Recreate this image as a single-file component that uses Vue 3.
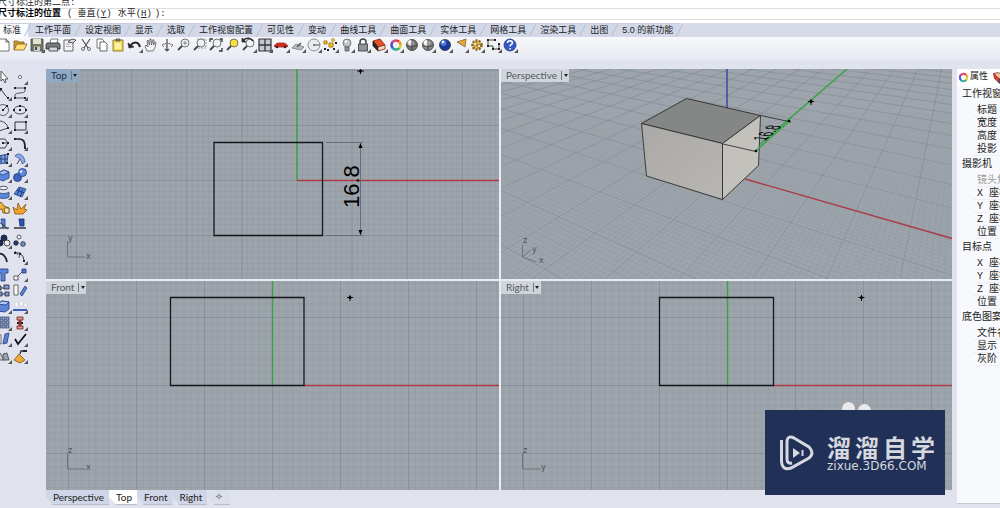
<script setup>
const menuTabs = ['标准', '工作平面', '设定视图', '显示', '选取', '工作视窗配置', '可见性', '变动', '曲线工具', '曲面工具', '实体工具', '网格工具', '渲染工具', '出图', '5.0 的新功能']

const line = (d, c = '#444', w = 1) => `<path d="${d}" fill="none" stroke="${c}" stroke-width="${w}"/>`
const shape = (d, f, c = '#333', w = 0.8) => `<path d="${d}" fill="${f}" stroke="${c}" stroke-width="${w}" stroke-linejoin="round"/>`
const dot = (x, y, r, f, c = 'none') => `<circle cx="${x}" cy="${y}" r="${r}" fill="${f}" stroke="${c}" stroke-width=".8"/>`
const nodes = (...pts) => pts.map(([x, y]) => `<rect x="${x - 1}" y="${y - 1}" width="2" height="2" fill="#222"/>`).join('')
const lens = (c = '#eef1f6') => dot(9, 6, 4, c, '#555') + line('M6 9L2 13', '#444', 1.8)
const ball = (a, b) => dot(8, 8, 5.5, b, '#333') + dot(6.5, 6, 3, a) + dot(6, 5, 1.2, '#fff')
const wheel = ['#e33', '#e9a020', '#d8cf2a', '#3cae48', '#2aa5b8', '#2f58c8', '#8a3ab8', '#d23a86']
  .map((c, i) => {
    const p = a => `${(8 + 4.5 * Math.cos(a)).toFixed(1)} ${(8 + 4.5 * Math.sin(a)).toFixed(1)}`
    return line(`M${p(i * Math.PI / 4 - 1.6)}A4.5 4.5 0 0 1 ${p((i + 1) * Math.PI / 4 - 1.6)}`, c, 2.6)
  }).join('')

const toolbar = [
  ['新建', shape('M3 2h7l3 3v9H3z', '#fff', '#555') + line('M10 2v3h3', '#555')],
  ['打开', shape('M2 13V4h4l1 1h5v3', '#c9962c', '#80601d') + shape('M2 13l3-6h10l-3 6z', '#ffe07a', '#80601d')],
  ['保存', shape('M2 2h12v12H2z', '#73765c', '#444') + '<path d="M4 2h8v5H4z" fill="#dfe6d2"/><path d="M5 9.500h6V14H5z" fill="#c9cfd5"/><path d="M6 10h2v3H6z" fill="#444"/>', 1],
  ['打印', shape('M5 6l1-4h7l-1 4', '#fff', '#555') + shape('M2 6h12l1 2v4H1V8z', '#777d84', '#222') + shape('M4 10h8l1 4H4z', '#d5d9de', '#333')],
  ['文件属性', shape('M3 3h9v11H3z', '#f4f5f7', '#444') + line('M5 7h4M5 9.500h5', '#aaa') + shape('M7 5l4-3 4 1-3 3z', '#ddd', '#333')],
  ['剪切', line('M4 2l6 9M12 2L6 11', '#555', 1.2) + dot(5, 12, 1.5, 'none', '#555') + dot(11, 12, 1.5, 'none', '#555')],
  ['复制', shape('M3 2h5l2 2v7H3z', '#fff', '#555') + shape('M6 5h5l2 2v7H6z', '#fff', '#444')],
  ['粘贴', shape('M3 3h10v11H3z', '#f3dc58', '#7a6420') + shape('M6 2h4v2H6z', '#999', '#444') + '<path d="M5 6h6v6H5z" fill="#fdf2a4"/>'],
  ['撤销', line('M4 8c3-4 8-3 9 2', '#222', 2) + shape('M1 6l1 5 5-1z', '#222'), 1],
  ['平移', shape('M4 14L2 9l1-1 2 2-1-6 1-1 1.500 5L7 2h1l.500 6L10 2.500l1 .5-.5 5L12 5l1 .5-1 5-2 3.500z', '#f5f5f5', '#555')],
  ['旋转视图', line('M8 2v12M8 14l-2-2M8 14l2-2', '#555', 1.3) + line('M3 8c2-2 8-2 11 0M3 8l2 2M14 8l-2 2', '#777')],
  ['缩放', lens() + line('M7 6h4M9 4v4', '#888')],
  ['框选缩放', lens() + '<path d="M5 2h9v9H5" fill="none" stroke="#999" stroke-dasharray="2 1"/>'],
  ['缩放至最大范围', lens() + line('M2 5V2h3M12 2h2v3M14 11v3h-3', '#333', 1.3)],
  ['缩放选取物件', lens('#f7e13c')],
  ['复原视图', lens() + line('M2 3c4-3 8-2 10 1', '#333', 1.6) + shape('M1 1v4h4z', '#222'), 1],
  ['四视图', shape('M2 2h12v12H2z', '#c5cad2', '#333', 1.2) + line('M8 2v12M2 8h12', '#333', 1.3), 1],
  ['着色车', shape('M1 9l2-2 2-1h6l2 1 2 2-1 1H2z', '#d32a22', '#a8241e') + dot(4, 10, 1.2, '#222') + dot(12, 10, 1.2, '#222'), 1],
  ['工作平面', shape('M2 11l4-4 8 3-3 3z', '#b9bec5', '#777') + line('M7 10l4-4', '#555', 1.5), 1],
  ['圆', dot(8, 8, 6, '#e8ebf0', '#777') + line('M8 8h6', '#777', 1.3) + dot(8, 8, 1, '#666'), 1],
  ['选取点', '<path d="M2 4h3v3H2zM7 6h4v4H7z" fill="#f3c32c" stroke="#a87a15"/>' + dot(11, 3, 1.5, '#f8dc50', '#aa8018') + nodes([3, 12], [6, 13], [12, 12], [14, 6]), 1],
  ['隐藏', dot(8, 6, 4, '#bfc4ca', '#666') + shape('M6 10h4v4H6z', '#8f959c', '#555') + dot(7, 4.5, 1.2, '#fff'), 1],
  ['锁定', line('M5 8V5a3 3 0 0 1 6 0v3', '#444', 1.5) + shape('M3.500 7h9v7h-9z', '#8e939a', '#333'), 1],
  ['图层', shape('M2 4l7-2 5 6-7 2z', '#e8502a', '#7e2412') + shape('M2 4l5 6v4L2 9z', '#33262a', '#222') + shape('M7 10l7-2v4l-7 2z', '#f6d9c8', '#7e2412'), 1],
  ['颜色', wheel, 1],
  ['着色', ball('#ddd', '#777') + line('M3 8c3 2 7 2 10 0M8 3v10', '#444')],
  ['渲染着色', ball('#eee', '#888') + line('M3 8c3 2 7 2 10 0M8 3v10', '#444'), 1],
  ['渲染', ball('#4f7bd6', '#173a9a'), 1],
  ['聚光灯', shape('M4 5l9-3-1 8z', '#e4a93a', '#88602a'), 1],
  ['选项', '<circle cx="8" cy="8" r="4.500" fill="#e8c257" stroke="#8c651e" stroke-width="2.500" stroke-dasharray="2 1.200"/>' + dot(6, 7, 2, '#f8e9b0', '#8c651e') + dot(10, 9, 1.7, '#f8e9b0', '#8c651e'), 1],
  ['尺寸标注', line('M2 3h7M2 3v6h5v3h6V7', '#444') + nodes([2, 3], [9, 3], [2, 9], [7, 12], [13, 12], [13, 7]), 1],
  ['帮助', dot(8, 8, 6, '#3558c4', '#203580') + line('M5.500 6c0-3 5-3 5 0 0 1.500-2.500 1.500-2.500 3.500M8 11v1.500', '#fff', 1.5), 1],
]

const blue = '#5b85d6'
const sideTools = [
  ['选择', shape('M5 2v10l2-2 2 4 1-1-1-3h3z', '#fff', '#333')],
  ['点', dot(8, 8, 1.6, '#fff', '#555'), 1],
  ['折线', line('M1 13L5 4l4 6 3 3', '#444') + nodes([5, 4], [12, 13]), 1],
  ['控制点曲线', line('M3 3h10v3c0 3-10 1-10 4v3h9', '#555') + nodes([3, 3], [13, 3], [3, 13], [13, 13]), 1],
  ['圆', dot(7, 8, 5.5, 'none', '#444') + line('M7 8l4-4', '#444') + nodes([7, 8], [11, 4]), 1],
  ['椭圆', '<ellipse cx="8" cy="8" rx="6" ry="4" fill="none" stroke="#444"/>' + nodes([8, 4], [8, 8], [2, 8], [14, 8]), 1],
  ['圆弧', line('M3 3c5 0 8 3 9 7L3 13z', '#444') + nodes([3, 3], [12, 10], [3, 13]), 1],
  ['矩形', shape('M3 4h11v8H3z', 'none', '#333', 1) + nodes([3, 12], [14, 4]), 1],
  ['多边形', shape('M4 4h5l3 4-3 5H4L1 8z', 'none', '#444', 1) + line('M7 8h5', '#444') + nodes([7, 8], [12, 8]), 1],
  ['圆角', line('M3 4h4c5 0 6 3 6 9', '#222', 1.7) + nodes([3, 4], [13, 13]), 1],
  ['曲面', shape('M2 5l10-2-1 9-8 1z', '#7f9fe0', '#26437f') + line('M5 4v8M9 3v9M3 8h9', '#26437f') + nodes([2, 5], [12, 3], [11, 12]), 1],
  ['旋转曲面', shape('M3 5c3-4 9-2 10 6l-3 2c0-4-3-6-7-8z', '#8eabe8', '#34549a') + line('M8 8l-3 5', '#444'), 1],
  ['立方体', shape('M2 6l6-3 5 2v6l-6 3-5-2z', blue, '#1f3b80') + shape('M2 6l6-3 5 2-6 3z', '#a9c2f2', '#1f3b80'), 1],
  ['球体', dot(5.5, 10.5, 4, '#3d67c0', '#1c3371') + dot(10.500, 5.500, 4, '#5f8ade', '#1c3371') + dot(9, 4.5, 1.3, '#dce8ff'), 1],
  ['圆柱', shape('M2 8c3 2 8 2 11 0v5c-3 2-8 2-11 0z', blue, '#27457e') + '<ellipse cx="7.500" cy="4" rx="4" ry="1.800" fill="#eef3ff" stroke="#555"/>', 1],
  ['曲面网格', shape('M2 10l5-7 7 2-4 8z', blue, '#1f3b80') + line('M5 6l7 3M8 4l-3 7M11 5l-3 8', '#1f3b80'), 1],
  ['组合', shape('M1 5l4-3 3 4 5 2v5H7l-1-4-4 1z', '#f1b43c', '#6c4a12') + shape('M8 8h5v5H9z', '#fbe6a0', '#6c4a12')],
  ['炸开', shape('M3 14L1 7l4 3 1-7 3 6 5-5-2 5 3 1-4 4z', '#f0a329', '#8f4d10')],
  ['修剪', line('M1 11h12', '#333', 1.2) + shape('M5 2l4 0 0 7-2 2z', blue, '#1f3b80') + line('M2 4l10 8', '#333')],
  ['分割', line('M2 11h12', '#333', 1.5) + shape('M7 2h5v7H8z', '#2d56b4', '#15295c')],
  ['群组', dot(8, 5, 3, '#1d2b62', '#111') + dot(4, 10, 3, '#1d2b62', '#111') + dot(11, 10, 3, '#e8edf9', '#222'), 1],
  ['解散群组', dot(7, 4, 2, '#f2f5fc', '#333') + dot(4, 10, 2.3, '#22377d', '#222') + dot(11, 11, 2.3, '#6e91d8', '#222')],
  ['偏移曲线', line('M1 5c6-2 9 3 10 8', '#222', 1.8)],
  ['衔接曲线', line('M3 4c6-1 9 3 9 9', '#333') + line('M3 2l3 4M8 3l-1 6', '#555') + nodes([3, 4], [8, 5], [12, 12]), 1],
  ['文字', shape('M2 3h10v4H9v8H5V7H2z', blue, '#1f3b80')],
  ['移动', line('M4 12l7-7', '#555') + shape('M2 10h4v4H2z', '#fff', '#333') + shape('M10 3h4v4h-4z', '#4e74c6', '#1f3b80'), 1],
  ['复制物件', shape('M1 4h4v4H1zM8 3h5v4H8zM2 10h4v4H2zM9 10h4v4H9z', '#7c9ade', '#222') + line('M5 6h3M6 12h3', '#333')],
  ['旋转', shape('M2 3h4v10H2z', '#fff', '#444') + shape('M8 12l5-8 2 2-5 8z', blue, '#1f3b80')],
  ['三轴缩放', shape('M1 6l5-3 7 1v7l-4 3-8-1z', blue, '#1f3b80') + shape('M1 6l5-3 7 1-3 3z', '#b3c9f5', '#1f3b80'), 1],
  ['阵列', '<path d="M3 4h3v5H3zM8 3h3v5H8zM12 5h3v4h-3z" fill="#fff" stroke="#bbb" stroke-width=".5"/>' + line('M1 12h14', '#3a62b9', 2), 1],
  ['矩形阵列', [3, 7, 11].map(x => [3, 7, 11].map(y => `<rect x="${x - 1}" y="${y - 1}" width="3" height="3" fill="#8fa9dc" stroke="#26365f" stroke-width=".7"/>`).join('')).join(''), 1],
  ['对齐', shape('M5 2h6v3H5zM5 11h6v3H5z', '#d99a96', '#6c1d1c') + line('M8 5v6', '#9c2d2c', 3) + nodes([6, 8], [10, 8]), 1],
  ['弯曲', shape('M2 3l3 1v9l-3-1z', '#fff', '#444') + shape('M7 13L9 3l4-1-2 10z', blue, '#1f3b80'), 1],
  ['检查', line('M3 8l3 5 8-10', '#111', 1.8), 1],
  ['布尔运算', shape('M1 12l3-7 4 7z', '#c9cdd3', '#444') + shape('M7 12V6l4-1 2 7z', '#9ba1a9', '#444'), 1],
  ['更多', shape('M2 12l5-6 6 6-5 3z', '#eda93a', '#7e5512') + line('M8 6l1-3h4', '#333', 1.3) + nodes([12, 3], [14, 3]), 1],
]

const panelGroups = [
  ['工作视窗', ['标题', '宽度', '高度', '投影']],
  ['摄影机', ['镜头焦距', 'X 座标', 'Y 座标', 'Z 座标', '位置']],
  ['目标点', ['X 座标', 'Y 座标', 'Z 座标', '位置']],
  ['底色图案', ['文件名称', '显示', '灰阶']],
]

// Orthographic construction grid: lines every `step`, heavier every tenth.
function ortho(cx, cy, step) {
  let minor = ''
  let major = ''
  for (let i = -70; i <= 70; i++) {
    const x = (cx + i * step).toFixed(2)
    const y = (cy + i * step).toFixed(2)
    const d = `M${x} -100V600M-100 ${y}H900`
    if (i % 10) minor += d
    else major += d
  }
  return { minor, major }
}

// Ground-plane projection for the perspective view.
const depth = (x, y) => 1 - 0.00513 * x + 0.0093 * y
function project(x, y) {
  const d = depth(x, y)
  const u = (727 - 0.08 * x + 8.94 * y) / d - 501
  const v = (173.3 + 0.154 * x - 0.279 * y) / d - 69
  return `${u.toFixed(1)} ${v.toFixed(1)}`
}
function groundLine(a, b) {
  const near = 0.12
  const da = depth(...a)
  const db = depth(...b)
  if (da < near && db < near) return ''
  const cut = (p, q, dp, dq) => {
    const t = (near - dp) / (dq - dp)
    return [p[0] + (q[0] - p[0]) * t, p[1] + (q[1] - p[1]) * t]
  }
  const s = da < near ? cut(a, b, da, db) : a
  const e = db < near ? cut(b, a, db, da) : b
  return `M${project(...s)}L${project(...e)}`
}
function ground(lim) {
  let minor = ''
  let major = ''
  for (let i = -lim; i <= lim; i++) {
    const d = groundLine([i, -lim], [i, lim]) + groundLine([-lim, i], [lim, i])
    if (i % 10) minor += d
    else major += d
  }
  return { minor, major }
}

const topGrid = ortho(251, 111.5, 5.51)
const frontGrid = ortho(226.5, 104.5, 6.8)
const rightGrid = ortho(226.5, 104.5, 6.8)
const perspGrid = ground(150)
const viewTabs = ['Perspective', 'Top', 'Front', 'Right']
</script>

<template>
  <div class="app">
    <div class="command">
      <div class="history">尺寸标注的第二点:</div>
      <div class="prompt">
        <b>尺寸标注的位置</b><span class="paren">(</span>
        <a href="#">垂直(<u>Y</u>)</a><a href="#">水平(<u>H</u>)</a><span>):</span>
      </div>
    </div>

    <nav class="menu">
      <button v-for="(t, i) in menuTabs" :key="t" :class="{ on: i === 0 }">{{ t }}</button>
    </nav>

    <div class="toolbar">
      <button v-for="t in toolbar" :key="t[0]" :aria-label="t[0]" :class="{ more: t[2] }">
        <svg viewBox="0 0 16 16" v-html="t[1]"></svg>
      </button>
    </div>

    <div class="body">
      <div class="side">
        <button v-for="t in sideTools" :key="t[0]" :aria-label="t[0]" :class="{ more: t[2] }">
          <svg viewBox="0 0 16 16" v-html="t[1]"></svg>
        </button>
      </div>

      <main>
        <div class="views">
          <section class="view">
            <svg class="canvas" viewBox="0 0 453 210" preserveAspectRatio="xMidYMid slice">
              <path class="minor" :d="topGrid.minor" /><path class="major" :d="topGrid.major" />
              <path class="green" d="M251 0V111.500" /><path class="red" d="M251 111.500H453" />
              <path class="box" d="M168 73.500H276.500V166.500H168z" />
              <path class="thin" d="M280 73.500H317M280 166.500H317M314.500 74V166" />
              <path d="M314.500 74l-2 5h4zM314.500 166l-2-5h4z" />
              <text class="dim" transform="translate(313 139) rotate(-90)">16.8</text>
              <path class="mark" d="M311 2h7M314.500 -2v7" /><circle cx="314.500" cy="2" r="1.500" />
              <path class="axis" d="M21.500 172v16h18" /><text class="ax" x="22" y="172">y</text><text class="ax" x="40" y="190">x</text>
            </svg>
            <button class="label on"><span>Top</span><i></i></button>
          </section>

          <section class="view">
            <svg class="canvas" viewBox="0 0 451 210" preserveAspectRatio="xMidYMid slice">
              <defs>
                <linearGradient id="fade" x1="0" y1="0" x2="0" y2="1">
                  <stop offset=".2" stop-color="#000" /><stop offset=".8" stop-color="#fff" />
                </linearGradient>
                <linearGradient id="near" x1="0" y1="0" x2="1" y2="1">
                  <stop offset="0" stop-color="#aaa9a7" /><stop offset="1" stop-color="#b8b6b2" />
                </linearGradient>
                <mask id="haze" maskUnits="userSpaceOnUse" x="0" y="0" width="451" height="210">
                  <rect width="451" height="210" fill="url(#fade)" />
                </mask>
              </defs>
              <g mask="url(#haze)"><path class="minor" :d="perspGrid.minor" /></g>
              <path class="major far" :d="perspGrid.major" />
              <path class="blue" d="M226 0V40" />
              <path class="green" d="M346 0L257 77" /><path class="red" d="M244 110L451 169.500" />
              <path class="face" fill="#858686" d="M140.500 54.500L185.500 29.500L259.500 46.500L221.500 74.500z" />
              <path class="face" fill="url(#near)" d="M140.500 54.500L221.500 74.500V130.500L145.500 107z" />
              <path class="face" fill="#c3c1bc" d="M221.500 74.500L259.500 46.500L257.500 96.500L221.500 130.500z" />
              <path class="thin dark" d="M260 46.500L290 53M222 75L255 82.500" />
              <path class="green" d="M254 82.500L288 52.500" />
              <circle cx="288" cy="52" r="1.300" /><circle cx="255" cy="82" r="1.300" />
              <text class="dim" transform="matrix(.4 -.35 .88 .08 264 72)">16.8</text>
              <path class="mark" d="M307 32.500h6M310 30v6" /><circle cx="310" cy="32.500" r="1.500" />
              <path class="axis" d="M21.500 176v12l14 5M21.500 188l8-7" />
              <text class="ax" x="22" y="174">z</text><text class="ax" x="31" y="183">y</text><text class="ax" x="38" y="194">x</text>
            </svg>
            <button class="label"><span>Perspective</span><i></i></button>
          </section>

          <section class="view">
            <svg class="canvas" viewBox="0 0 453 209" preserveAspectRatio="xMidYMid slice">
              <path class="minor" :d="frontGrid.minor" /><path class="major" :d="frontGrid.major" />
              <path class="green" d="M226.500 0V104" /><path class="red" d="M258 104.500H453" />
              <path class="box" d="M124.500 16.500H258V104.500H124.500z" />
              <path class="mark" d="M301 16.500h6M304 14v6" /><circle cx="304" cy="16.500" r="1.500" />
              <path class="axis" d="M21.500 172v16h18" /><text class="ax" x="22" y="172">z</text><text class="ax" x="40" y="189">x</text>
            </svg>
            <button class="label"><span>Front</span><i></i></button>
          </section>

          <section class="view">
            <svg class="canvas" viewBox="0 0 451 209" preserveAspectRatio="xMidYMid slice">
              <path class="minor" :d="rightGrid.minor" /><path class="major" :d="rightGrid.major" />
              <path class="green" d="M226.500 0V104" /><path class="red" d="M272 104.500H451" />
              <path class="box" d="M158.500 16.500H272.500V104.500H158.500z" />
              <path class="mark" d="M357.500 16.500h6M360.500 14v6" /><circle cx="360.500" cy="16.500" r="1.500" />
              <path class="axis" d="M21.500 172v16h18" /><text class="ax" x="22" y="172">z</text><text class="ax" x="40" y="189">y</text>
            </svg>
            <button class="label"><span>Right</span><i></i></button>
          </section>
        </div>

        <nav class="viewtabs">
          <button v-for="t in viewTabs" :key="t" :class="{ on: t === 'Top' }">{{ t }}</button>
          <button class="add" aria-label="新增">✧</button>
        </nav>
      </main>

      <aside>
        <div class="phead">
          <svg viewBox="0 0 16 16" v-html="wheel"></svg><span>属性</span>
          <svg class="second" viewBox="0 0 16 16"><path d="M2 3l6-1 6 4-5 4z" fill="#f6c8b0" stroke="#8c2b1a" /><path d="M2 3l7 7v5L3 9z" fill="#e2432a" stroke="#8c2b1a" /><path d="M9 10l5-4v5l-5 4z" fill="#3d62b8" stroke="#243c78" /></svg>
        </div>
        <template v-for="g in panelGroups" :key="g[0]">
          <h3>{{ g[0] }}</h3>
          <p v-for="r in g[1]" :key="r" :class="{ off: r === '镜头焦距' }">{{ r }}</p>
        </template>
      </aside>
    </div>

    <div class="brand">
      <i class="knob"></i><i class="knob two"></i>
      <div class="plate">
        <svg viewBox="0 0 36 36">
          <path d="M2.500 5V26Q3 36 12 33L30 23Q36 18 30 12L15 3Q8 0 8 7V24Q8 29 13 28" fill="none" stroke="#d5d8de" stroke-width="3" />
          <path d="M14 13l7 5-7 5z" fill="#d5d8de" /><path d="M23.500 15v6" stroke="#d5d8de" stroke-width="2" />
        </svg>
        <div>
          <div class="name"><span>溜</span><span>溜</span><span>自</span><span>学</span></div>
          <div class="url">zixue.3D66.COM</div>
        </div>
      </div>
    </div>
  </div>
</template>

<style>
body { margin: 0; background: #e0e3ed; }
</style>

<style scoped>
.app {
  position: relative;
  display: flex;
  flex-direction: column;
  min-height: 100vh;
  overflow: hidden;
  background: #e0e3ed;
  color: #222;
  font: 9px/12px "Liberation Sans", "Noto Sans CJK SC", sans-serif;
}
button { margin: 0; padding: 0; border: 0; background: none; color: inherit; font: inherit; white-space: nowrap; }
a { color: inherit; text-decoration: none; }
.command { height: 23px; background: #fff; overflow: hidden; white-space: nowrap; font-family: "Liberation Mono", "Noto Sans CJK SC", monospace; }
.history { height: 8px; line-height: 6px; border-bottom: 1px solid #ddd; overflow: hidden; margin-left: -2px; }
.prompt { display: flex; height: 10px; line-height: 10px; border-bottom: 1px solid #ddd; margin-left: -2px; }
.prompt b { color: #000; }
.paren { margin: 0 5px 0 6px; }
.prompt a { margin-right: 6px; }
.prompt a + a { margin-right: 3px; }

.menu { display: flex; height: 14px; background: #d6dbe7; }
.menu button {
  position: relative;
  padding: 0 7px;
  line-height: 13px;
  background: #d3d8e8;
  border-top: 1px solid #c8cedc;
}
.menu button::after {
  content: "";
  position: absolute;
  z-index: 1;
  right: 0;
  top: 0;
  height: 13px;
  border-right: 1px solid #b9c0d2;
  transform: rotate(28deg);
}
.menu button.on { background: #fafbfd; padding-left: 3px; }

.toolbar {
  display: grid;
  grid-template-columns: repeat(32, 1fr);
  align-items: start;
  width: 522px;
  height: 32px;
  margin-left: -4px;
}
.toolbar::before { content: ""; position: absolute; z-index: 0; left: 0; right: 0; height: 24px; background: linear-gradient(#f7f8fb, #e6e9f1); }
.toolbar button, .side button { position: relative; display: grid; place-items: center; height: 16px; }
.toolbar svg, .side svg { width: 16px; height: 16px; }
.more::after {
  content: "";
  position: absolute;
  right: 0;
  bottom: 0;
  border: 2px solid;
  border-color: transparent #555 #555 transparent;
}

.body { flex: 1; display: flex; min-height: 0; }
.side {
  display: grid;
  grid-template: repeat(18, 1fr) / 16px 16px;
  height: 295px;
  width: 50px;
  margin-left: -4px;
  flex: none;
}
main { flex: 1; min-width: 0; display: flex; flex-direction: column; }
.views { flex: 1; display: grid; grid-template: 210fr 209fr / 453fr 451fr; gap: 2px; background: #e9ecf3; }
.view { position: relative; min-width: 0; min-height: 0; overflow: hidden; background: #9da4ab; }
.canvas { position: absolute; inset: 0; width: 100%; height: 100%; }
.minor { fill: none; stroke: #6f7c8b; stroke-width: 1; opacity: .13; }
.major { fill: none; stroke: #66707c; stroke-width: 1; opacity: .36; }
.far { opacity: .3; }
.green, .red, .blue { fill: none; stroke-width: 1.4; }
.green { stroke: #35a542; }
.red { stroke: #ad3a44; }
.blue { stroke: #383fae; }
.box { fill: none; stroke: #14171b; stroke-width: 1.3; }
.thin { fill: none; stroke: #5b6168; stroke-width: .8; }
.dark { stroke: #222; }
.mark { fill: none; stroke: #111; stroke-width: 1; }
.axis { fill: none; stroke: #6c737b; stroke-width: 1; }
.face { stroke: #30302e; stroke-width: .9; stroke-linejoin: round; }
.dim { font: 22px "Liberation Sans", sans-serif; fill: #000; }
.ax { font: 8px "DejaVu Sans", sans-serif; fill: #4d545c; }
.label {
  position: absolute;
  left: 0;
  top: 0;
  display: flex;
  align-items: center;
  height: 13px;
  background: #d0d4db;
  color: #55595f;
  font: 10px/13px Lato, "Noto Sans", sans-serif;
}
.label span { padding: 0 4px 0 5px; }
.label i { width: 7px; height: 9px; border-left: 1px solid #777; display: grid; place-items: center; }
.label i::after { content: ""; border: 2px solid transparent; border-top: 3px solid #222; border-bottom: 0; }
.label.on { background: #8fa8c4; color: #1f3048; }

.viewtabs { display: flex; height: 18px; align-items: flex-start; font: 10px/14px Lato, "Noto Sans", sans-serif; }
.viewtabs button { height: 15px; padding: 0 5px 0 7px; background: #d0d6e8; border-bottom: 1px solid #b5bccd; clip-path: polygon(0 0, 100% 0, 100% 100%, 7px 100%, 0 7px); }
.viewtabs .on { background: #fff; }
.viewtabs .add { width: 23px; padding: 0; background: #dce0eb; color: #555; font-family: "DejaVu Sans", sans-serif; }

aside { flex: none; width: 43px; margin: 0 0 5px 5px; overflow: hidden; background: #f8f9fc; font: 10px/13px "Liberation Mono", "Noto Sans CJK SC", monospace; white-space: nowrap; box-shadow: 0 1px #c5c9d1; }
.phead { display: flex; align-items: center; height: 17px; font-size: 9px; background: #fff; }
.phead svg { flex: none; width: 13px; height: 13px; }
.phead .second { margin-left: 4px; }
h3 { margin: 0; padding-left: 5px; height: 18px; font-weight: 400; font-size: 10px; line-height: 18px; }
p { margin: 0 0 0 16px; padding-left: 4px; height: 13px; line-height: 13px; border-bottom: 1px solid #eceef3; box-sizing: border-box; }
p.off { color: #999; }

.brand { position: absolute; right: 55px; bottom: 13px; }
.plate { position: relative; display: flex; align-items: center; gap: 12px; box-sizing: border-box; width: 180px; height: 85px; padding: 0 14px; background: #213056; color: #d5d8de; }
.plate svg { width: 36px; height: 36px; flex: none; }
.name { display: flex; gap: 4px; font: 700 24px/27px "Noto Sans CJK SC", sans-serif; }
.url { font: 12px/13px "DejaVu Sans", sans-serif; }
.knob { position: absolute; left: 77px; top: -8px; width: 13px; height: 13px; border-radius: 50%; background: #e9e9ea; }
.two { left: 93px; top: -6px; }
</style>
